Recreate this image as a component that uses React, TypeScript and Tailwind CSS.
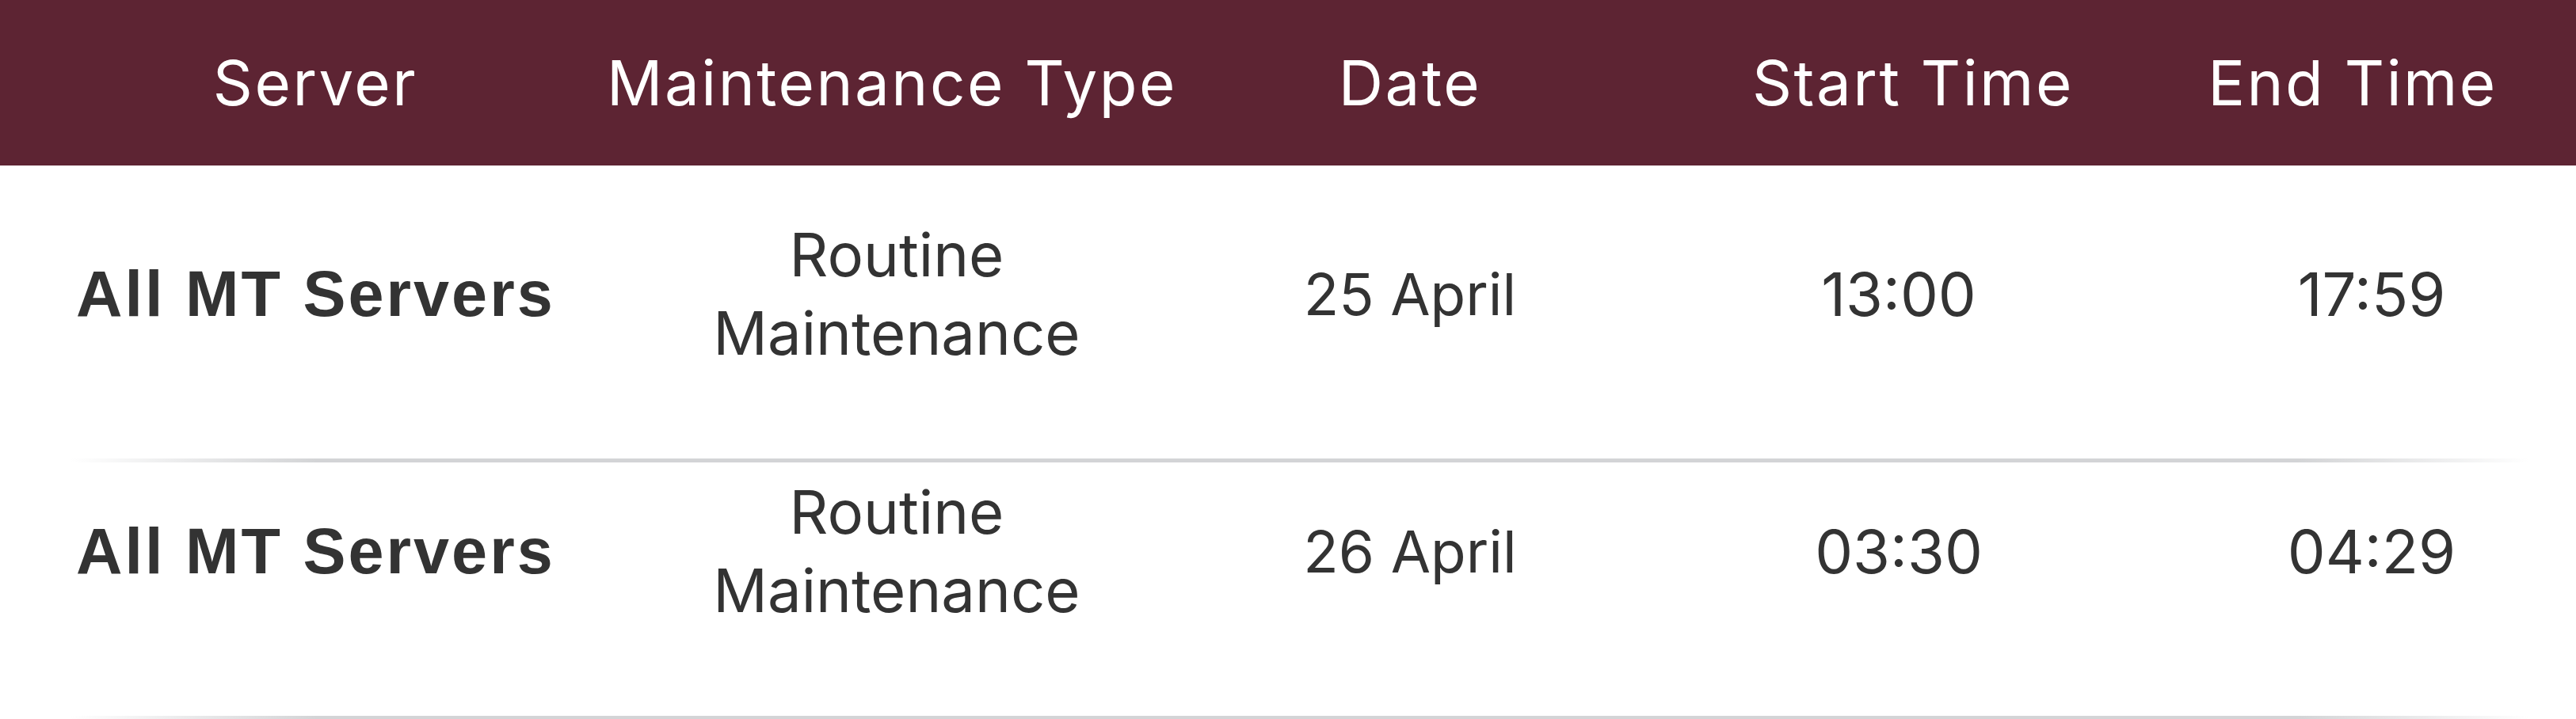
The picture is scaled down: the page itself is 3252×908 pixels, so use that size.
import React from "react";

const rows = [
  { server: "All MT Servers", type: ["Routine", "Maintenance"], date: "25 April", start: "13:00", end: "17:59" },
  { server: "All MT Servers", type: ["Routine", "Maintenance"], date: "26 April", start: "03:30", end: "04:29" },
];

export default function App() {
  return (
    <div className="w-[3252px] bg-white font-['Inter',sans-serif]">
      <div className="grid h-[209px] grid-cols-[766px_720px_588px_682px_428px] items-center whitespace-nowrap bg-[#5d2433] text-center text-[78px] leading-none tracking-[2.5px] text-white">
        <div className="pl-[30px]">Server</div>
        <div>Maintenance Type</div>
        <div>Date</div>
        <div>Start Time</div>
        <div>End Time</div>
      </div>
      <div className="pt-[50px]">
        {rows.map((r, i) => (
          <div key={i}>
            <div className="grid grid-cols-[796px_672px_624px_610px_550px] items-center whitespace-nowrap pt-[13px] pb-[109px] text-center text-[76px] leading-[99px] text-[#333333]">
              <div className="pl-[96px] text-left font-['Liberation_Sans',Arial,sans-serif] text-[81px] font-bold tracking-[3px]">
                {r.server}
              </div>
              <div>
                <div>{r.type[0]}</div>
                <div>{r.type[1]}</div>
              </div>
              <div className="text-[73px]">{r.date}</div>
              <div>{r.start}</div>
              <div className="pl-[34px]">{r.end}</div>
            </div>
            <div className="h-[5px] bg-[linear-gradient(to_right,transparent_88px,#d3d4d6_400px,#d3d4d6_2900px,transparent_3193px)]" />
          </div>
        ))}
      </div>
    </div>
  );
}
